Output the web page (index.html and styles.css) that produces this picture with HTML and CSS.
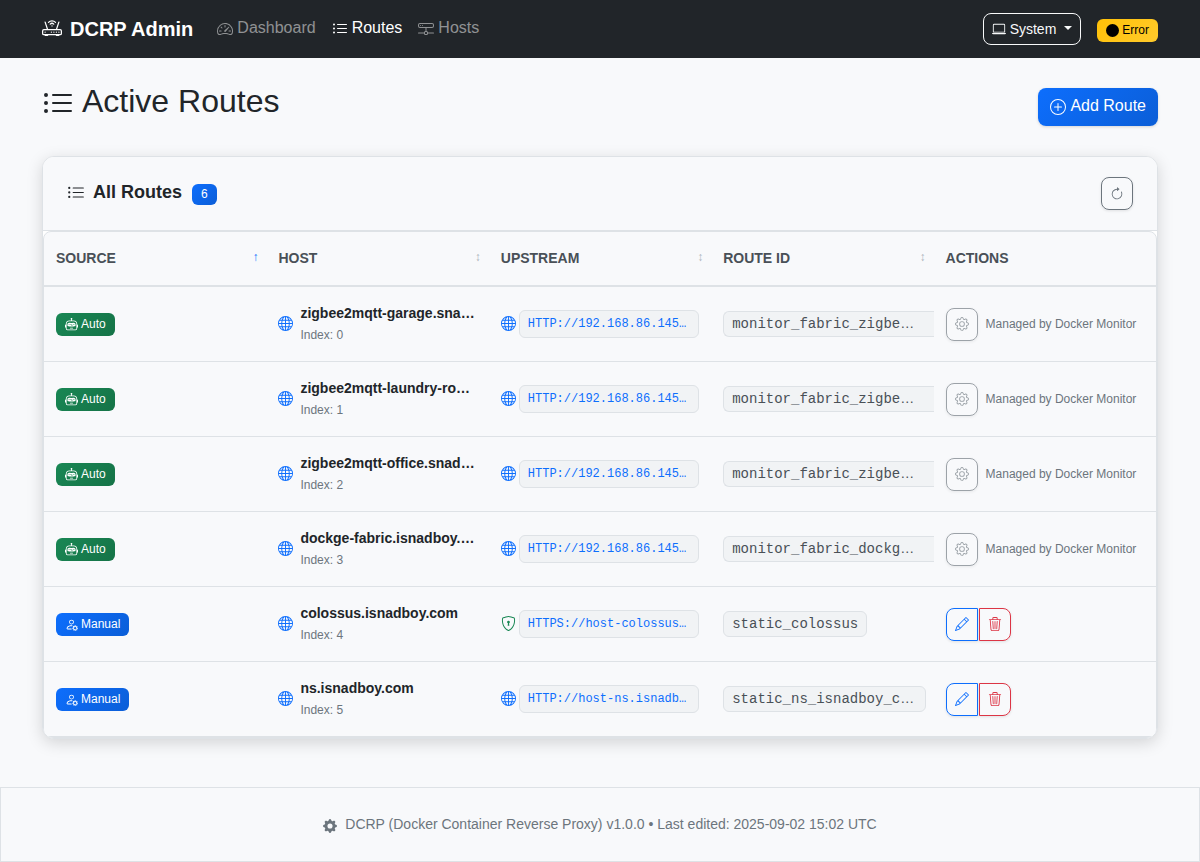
FILE: index.html
```html
<!DOCTYPE html>
<html lang="en">
<head>
<meta charset="utf-8">
<meta name="viewport" content="width=device-width, initial-scale=1">
<title>Active Routes - DCRP Admin</title>
<link rel="stylesheet" href="styles.css">
</head>
<body>
<svg class="sprite" aria-hidden="true">
  <symbol id="list" viewBox="0 0 16 16"><path fill-rule="evenodd" d="M5 11.5a.5.5 0 0 1 .5-.5h9a.5.5 0 0 1 0 1h-9a.5.5 0 0 1-.5-.5m0-4a.5.5 0 0 1 .5-.5h9a.5.5 0 0 1 0 1h-9a.5.5 0 0 1-.5-.5m0-4a.5.5 0 0 1 .5-.5h9a.5.5 0 0 1 0 1h-9a.5.5 0 0 1-.5-.5m-3 1a1 1 0 1 0 0-2 1 1 0 0 0 0 2m0 4a1 1 0 1 0 0-2 1 1 0 0 0 0 2m0 4a1 1 0 1 0 0-2 1 1 0 0 0 0 2"/></symbol>
  <symbol id="router" viewBox="0 0 16 16"><path d="M5.525 3.025a3.5 3.5 0 0 1 4.95 0 .5.5 0 1 0 .707-.707 4.5 4.5 0 0 0-6.364 0 .5.5 0 0 0 .707.707"/><path d="M6.94 4.44a1.5 1.5 0 0 1 2.12 0 .5.5 0 0 0 .708-.708 2.5 2.5 0 0 0-3.536 0 .5.5 0 0 0 .707.707ZM2.5 11a.5.5 0 1 1 0-1 .5.5 0 0 1 0 1m4.5-.5a.5.5 0 1 0 1 0 .5.5 0 0 0-1 0m2.5.5a.5.5 0 1 1 0-1 .5.5 0 0 1 0 1m1.5-.5a.5.5 0 1 0 1 0 .5.5 0 0 0-1 0m2 0a.5.5 0 1 0 1 0 .5.5 0 0 0-1 0"/><path d="M2.974 2.342a.5.5 0 1 0-.948.316L3.806 8H1.5A1.5 1.5 0 0 0 0 9.5v2A1.5 1.5 0 0 0 1.5 13H2a.5.5 0 0 0 .5.5h2A.5.5 0 0 0 5 13h6a.5.5 0 0 0 .5.5h2a.5.5 0 0 0 .5-.5h.5a1.5 1.5 0 0 0 1.5-1.5v-2A1.5 1.5 0 0 0 14.5 8h-2.306l1.78-5.342a.5.5 0 1 0-.948-.316L11.14 8H4.86zM14.5 9a.5.5 0 0 1 .5.5v2a.5.5 0 0 1-.5.5h-13a.5.5 0 0 1-.5-.5v-2a.5.5 0 0 1 .5-.5z"/><path d="M8.5 5.5a.5.5 0 1 1-1 0 .5.5 0 0 1 1 0"/></symbol>
  <symbol id="speedometer" viewBox="0 0 16 16"><path d="M8 4a.5.5 0 0 1 .5.5V6a.5.5 0 0 1-1 0V4.5A.5.5 0 0 1 8 4M3.732 5.732a.5.5 0 0 1 .707 0l.915.914a.5.5 0 1 1-.708.708l-.914-.915a.5.5 0 0 1 0-.707M2 10a.5.5 0 0 1 .5-.5h1.586a.5.5 0 0 1 0 1H2.5A.5.5 0 0 1 2 10m9.5 0a.5.5 0 0 1 .5-.5h1.5a.5.5 0 0 1 0 1H12a.5.5 0 0 1-.5-.5m.754-4.246a.39.39 0 0 0-.527-.02L7.547 9.31a.91.91 0 1 0 1.302 1.258l3.434-4.297a.39.39 0 0 0-.029-.518z"/><path fill-rule="evenodd" d="M0 10a8 8 0 1 1 15.547 2.661c-.442 1.253-1.845 1.602-2.932 1.25C11.309 13.488 9.475 13 8 13c-1.474 0-3.31.488-4.615.911-1.087.352-2.49.003-2.932-1.25A8 8 0 0 1 0 10m8-7a7 7 0 0 0-6.603 9.329c.203.575.923.876 1.68.63C4.397 12.533 6.358 12 8 12s3.604.532 4.923.96c.757.245 1.477-.056 1.68-.631A7 7 0 0 0 8 3"/></symbol>
  <symbol id="network" viewBox="0 0 16 16"><path d="M4.5 5a.5.5 0 1 0 0-1 .5.5 0 0 0 0 1M3 4.5a.5.5 0 1 1-1 0 .5.5 0 0 1 1 0"/><path d="M0 4a2 2 0 0 1 2-2h12a2 2 0 0 1 2 2v1a2 2 0 0 1-2 2H8.5v3a1.5 1.5 0 0 1 1.5 1.5h5.5a.5.5 0 0 1 0 1H10A1.5 1.5 0 0 1 8.5 14h-1A1.5 1.5 0 0 1 6 12.5H.5a.5.5 0 0 1 0-1H6A1.5 1.5 0 0 1 7.5 10V7H2a2 2 0 0 1-2-2zm1 0v1a1 1 0 0 0 1 1h12a1 1 0 0 0 1-1V4a1 1 0 0 0-1-1H2a1 1 0 0 0-1 1m6 7.5v1a.5.5 0 0 0 .5.5h1a.5.5 0 0 0 .5-.5v-1a.5.5 0 0 0-.5-.5h-1a.5.5 0 0 0-.5.5"/></symbol>
  <symbol id="laptop" viewBox="0 0 16 16"><path d="M13.5 3a.5.5 0 0 1 .5.5V11H2V3.500a.5.5 0 0 1 .5-.5zm-11-1A1.5 1.500 0 0 0 1 3.500V12h14V3.500A1.500 1.500 0 0 0 13.500 2zM0 12.500h16a1.500 1.500 0 0 1-1.500 1.500h-13A1.500 1.500 0 0 1 0 12.500"/></symbol>
  <symbol id="dot" viewBox="0 0 16 16"><circle cx="8" cy="8" r="8"/></symbol>
  <symbol id="plus" viewBox="0 0 16 16"><path d="M8 15A7 7 0 1 1 8 1a7 7 0 0 1 0 14m0 1A8 8 0 1 0 8 0a8 8 0 0 0 0 16"/><path d="M8 4a.5.5 0 0 1 .5.5v3h3a.5.5 0 0 1 0 1h-3v3a.5.5 0 0 1-1 0v-3h-3a.5.5 0 0 1 0-1h3v-3A.5.5 0 0 1 8 4"/></symbol>
  <symbol id="refresh" viewBox="0 0 16 16"><path fill-rule="evenodd" d="M8 3a5 5 0 1 0 4.546 2.914.5.5 0 0 1 .908-.417A6 6 0 1 1 8 2z"/><path d="M8 4.466V.534a.25.25 0 0 1 .41-.192l2.36 1.966c.12.1.12.284 0 .384L8.410 4.658A.25.25 0 0 1 8 4.466"/></symbol>
  <symbol id="robot" viewBox="0 0 16 16"><path d="M6 12.5a.5.5 0 0 1 .5-.5h3a.5.5 0 0 1 0 1h-3a.5.5 0 0 1-.5-.5M3 8.062C3 6.760 4.235 5.765 5.530 5.886a26.600 26.600 0 0 0 4.940 0C11.765 5.765 13 6.760 13 8.062v1.157a.93.93 0 0 1-.765.935c-.845.147-2.340.346-4.235.346s-3.390-.2-4.235-.346A.93.93 0 0 1 3 9.219zm4.542-.827a.25.25 0 0 0-.217.068l-.92.900a25 25 0 0 1-1.871-.183.25.25 0 0 0-.068.495c.550.076 1.232.149 2.020.193a.25.25 0 0 0 .189-.071l.754-.736.847 1.710a.25.25 0 0 0 .404.062l.932-.970a25 25 0 0 0 1.922-.188.25.25 0 0 0-.068-.495c-.538.074-1.207.145-1.980.189a.25.25 0 0 0-.166.076l-.754.785-.842-1.700a.25.25 0 0 0-.182-.135"/><path d="M8.500 1.866a1 1 0 1 0-1 0V3h-2A4.500 4.500 0 0 0 1 7.500V8a1 1 0 0 0-1 1v2a1 1 0 0 0 1 1v1a2 2 0 0 0 2 2h10a2 2 0 0 0 2-2v-1a1 1 0 0 0 1-1V9a1 1 0 0 0-1-1v-.5A4.500 4.500 0 0 0 10.500 3h-2zM14 7.500V13a1 1 0 0 1-1 1H3a1 1 0 0 1-1-1V7.500A3.500 3.500 0 0 1 5.500 4h5A3.500 3.500 0 0 1 14 7.500"/></symbol>
  <symbol id="person" viewBox="0 0 16 16"><path d="M11 5a3 3 0 1 1-6 0 3 3 0 0 1 6 0M8 7a2 2 0 1 0 0-4 2 2 0 0 0 0 4m.256 7a4.500 4.500 0 0 1-.229-1.004H3c.001-.246.154-.986.832-1.664C4.484 10.680 5.711 10 8 10q.390 0 .740.025c.226-.341.496-.650.804-.918Q8.844 9.002 8 9c-5 0-6 3-6 4s1 1 1 1z"/><circle cx="12.500" cy="12.500" r="2.100" fill="none" stroke="currentColor" stroke-width="1.200"/><path fill="none" stroke="currentColor" stroke-width="1.300" d="M12.500 9v1m0 5v1M9 12.500h1m5 0h1M10 10l.8.8m3.400 3.400.8.8m0-5-.8.8m-3.400 3.400-.8.8"/></symbol>
  <symbol id="globe" viewBox="0 0 16 16"><path d="M0 8a8 8 0 1 1 16 0A8 8 0 0 1 0 8m7.500-6.923c-.670.204-1.335.820-1.887 1.855A8 8 0 0 0 5.145 4H7.500zM4.090 4a9.300 9.300 0 0 1 .640-1.539 7 7 0 0 1 .597-.933A7.030 7.030 0 0 0 2.255 4zm-.582 3.500c.030-.877.138-1.718.312-2.500H1.674a7 7 0 0 0-.656 2.500zM4.847 5a12.500 12.500 0 0 0-.338 2.500H7.500V5zM8.500 5v2.500h2.990a12.500 12.500 0 0 0-.337-2.500zM4.510 8.500a12.500 12.500 0 0 0 .337 2.500H7.500V8.500zm3.990 0V11h2.653c.187-.765.306-1.608.338-2.500zM5.145 12q.208.580.468 1.068c.552 1.035 1.218 1.650 1.887 1.855V12zm.182 2.472a7 7 0 0 1-.597-.933A9.300 9.300 0 0 1 4.090 12H2.255a7 7 0 0 0 3.072 2.472M3.820 11a13.700 13.700 0 0 1-.312-2.500h-2.490c.062.890.291 1.733.656 2.500zm6.853 3.472A7 7 0 0 0 13.745 12H11.910a9.300 9.300 0 0 1-.640 1.539 7 7 0 0 1-.597.933M8.500 12v2.923c.670-.204 1.335-.820 1.887-1.855q.260-.487.468-1.068zm3.680-1h2.146c.365-.767.594-1.610.656-2.500h-2.490a13.700 13.700 0 0 1-.312 2.500m2.802-3.500a7 7 0 0 0-.656-2.500H12.180c.174.782.282 1.623.312 2.500zM11.270 2.461c.247.464.462.980.640 1.539h1.835a7 7 0 0 0-3.072-2.472c.218.284.418.598.597.933M10.855 4a8 8 0 0 0-.468-1.068C9.835 1.897 9.170 1.282 8.500 1.077V4z"/></symbol>
  <symbol id="shield" viewBox="0 0 16 16"><path d="M5.338 1.590a61 61 0 0 0-2.837.856.480.480 0 0 0-.328.390c-.554 4.157.726 7.190 2.253 9.188a10.700 10.700 0 0 0 2.287 2.233c.346.244.652.420.893.533q.180.085.293.118a1 1 0 0 0 .101.025 1 1 0 0 0 .100-.025q.114-.034.294-.118c.240-.113.547-.290.893-.533a10.700 10.700 0 0 0 2.287-2.233c1.527-1.997 2.807-5.031 2.253-9.188a.480.480 0 0 0-.328-.390c-.651-.213-1.750-.560-2.837-.855C9.552 1.290 8.531 1.067 8 1.067c-.530 0-1.552.223-2.662.524zM5.072.560C6.157.265 7.310 0 8 0s1.843.265 2.928.560c1.110.300 2.229.655 2.887.870a1.540 1.540 0 0 1 1.044 1.262c.596 4.477-.787 7.795-2.465 9.990a11.800 11.800 0 0 1-2.517 2.453 7 7 0 0 1-1.048.625c-.280.132-.581.240-.829.240s-.548-.108-.829-.240a7 7 0 0 1-1.048-.625 11.800 11.800 0 0 1-2.517-2.453C1.928 10.487.545 7.169 1.141 2.692A1.540 1.540 0 0 1 2.185 1.430 63 63 0 0 1 5.072.560"/><path d="M9.500 6.500a1.500 1.500 0 0 1-1 1.415l.385 1.990a.500.500 0 0 1-.491.595h-.788a.500.500 0 0 1-.490-.595l.384-1.990a1.500 1.500 0 1 1 2-1.415"/></symbol>
  <symbol id="gear" viewBox="0 0 16 16"><path d="M8 4.754a3.246 3.246 0 1 0 0 6.492 3.246 3.246 0 0 0 0-6.492M5.754 8a2.246 2.246 0 1 1 4.492 0 2.246 2.246 0 0 1-4.492 0"/><path d="M9.796 1.343c-.527-1.790-3.065-1.790-3.592 0l-.094.319a.873.873 0 0 1-1.255.520l-.292-.160c-1.640-.892-3.433.902-2.540 2.541l.159.292a.873.873 0 0 1-.520 1.255l-.319.094c-1.790.527-1.790 3.065 0 3.592l.319.094a.873.873 0 0 1 .520 1.255l-.160.292c-.892 1.640.901 3.434 2.541 2.540l.292-.159a.873.873 0 0 1 1.255.520l.094.319c.527 1.790 3.065 1.790 3.592 0l.094-.319a.873.873 0 0 1 1.255-.520l.292.160c1.640.893 3.434-.902 2.540-2.541l-.159-.292a.873.873 0 0 1 .520-1.255l.319-.094c1.790-.527 1.790-3.065 0-3.592l-.319-.094a.873.873 0 0 1-.520-1.255l.160-.292c.893-1.640-.902-3.433-2.541-2.540l-.292.159a.873.873 0 0 1-1.255-.520zm-2.633.283c.246-.835 1.428-.835 1.674 0l.094.319a1.873 1.873 0 0 0 2.693 1.115l.291-.160c.764-.415 1.600.420 1.184 1.185l-.159.292a1.873 1.873 0 0 0 1.116 2.692l.318.094c.835.246.835 1.428 0 1.674l-.319.094a1.873 1.873 0 0 0-1.115 2.693l.160.291c.415.764-.420 1.600-1.185 1.184l-.291-.159a1.873 1.873 0 0 0-2.693 1.116l-.094.318c-.246.835-1.428.835-1.674 0l-.094-.319a1.873 1.873 0 0 0-2.692-1.115l-.292.160c-.764.415-1.600-.420-1.184-1.185l.159-.291A1.873 1.873 0 0 0 1.945 8.930l-.319-.094c-.835-.246-.835-1.428 0-1.674l.319-.094A1.873 1.873 0 0 0 3.060 4.377l-.160-.292c-.415-.764.420-1.600 1.185-1.184l.292.159a1.873 1.873 0 0 0 2.692-1.115z"/></symbol>
  <symbol id="gear-fill" viewBox="0 0 16 16"><path d="M9.405 1.050c-.413-1.400-2.397-1.400-2.810 0l-.100.340a1.464 1.464 0 0 1-2.105.872l-.310-.170c-1.283-.698-2.686.705-1.987 1.987l.169.311c.446.820.023 1.841-.872 2.105l-.340.100c-1.400.413-1.400 2.397 0 2.810l.340.100a1.464 1.464 0 0 1 .872 2.105l-.170.310c-.698 1.283.705 2.686 1.987 1.987l.311-.169a1.464 1.464 0 0 1 2.105.872l.100.340c.413 1.400 2.397 1.400 2.810 0l.100-.340a1.464 1.464 0 0 1 2.105-.872l.310.170c1.283.698 2.686-.705 1.987-1.987l-.169-.311a1.464 1.464 0 0 1 .872-2.105l.340-.100c1.400-.413 1.400-2.397 0-2.810l-.340-.100a1.464 1.464 0 0 1-.872-2.105l.170-.310c.698-1.283-.705-2.686-1.987-1.987l-.311.169a1.464 1.464 0 0 1-2.105-.872zM8 10.930a2.929 2.929 0 1 1 0-5.860 2.929 2.929 0 0 1 0 5.858z"/></symbol>
  <symbol id="pencil" viewBox="0 0 16 16"><path d="M12.146.146a.5.5 0 0 1 .708 0l3 3a.5.5 0 0 1 0 .708l-10 10a.5.5 0 0 1-.168.110l-5 2a.5.5 0 0 1-.650-.650l2-5a.5.5 0 0 1 .110-.168zM11.207 2.500 13.500 4.793 14.793 3.500 12.500 1.207zm1.586 3L10.500 3.207 4 9.707V10h.5a.5.5 0 0 1 .5.5v.5h.5a.5.5 0 0 1 .5.5v.5h.293zm-9.761 5.175-.106.106-1.528 3.821 3.821-1.528.106-.106A.5.5 0 0 1 5 12.500V12h-.5a.5.5 0 0 1-.5-.5V11h-.5a.5.5 0 0 1-.468-.325"/></symbol>
  <symbol id="trash" viewBox="0 0 16 16"><path d="M6.500 1h3a.5.5 0 0 1 .5.5v1H6v-1a.5.5 0 0 1 .5-.5M11 2.500v-1A1.500 1.500 0 0 0 9.500 0h-3A1.500 1.500 0 0 0 5 1.500v1H1.500a.5.5 0 0 0 0 1h.538l.853 10.660A2 2 0 0 0 4.885 16h6.230a2 2 0 0 0 1.994-1.840l.853-10.660h.538a.5.5 0 0 0 0-1zm1.958 1-.846 10.580a1 1 0 0 1-.997.920h-6.230a1 1 0 0 1-.997-.920L3.042 3.500zm-7.487 1a.5.5 0 0 1 .528.470l.5 8.500a.5.5 0 0 1-.998.060L5 5.030a.5.5 0 0 1 .471-.530m5.058 0a.5.5 0 0 1 .470.530l-.5 8.500a.5.5 0 1 1-.998-.060l.5-8.500a.5.5 0 0 1 .528-.470M8 4.500a.5.5 0 0 1 .5.5v8.500a.5.5 0 0 1-1 0V5a.5.5 0 0 1 .5-.5"/></symbol>
</svg>

<header class="navbar">
  <div class="container navbar-inner">
    <a class="brand" href="#"><svg class="icon"><use href="#router"/></svg>DCRP Admin</a>
    <nav class="nav" aria-label="Main">
      <a class="nav-link" href="#"><svg class="icon"><use href="#speedometer"/></svg>Dashboard</a>
      <a class="nav-link active" href="#" aria-current="page"><svg class="icon"><use href="#list"/></svg>Routes</a>
      <a class="nav-link" href="#"><svg class="icon"><use href="#network"/></svg>Hosts</a>
    </nav>
    <button class="system" type="button" aria-haspopup="true"><svg class="icon"><use href="#laptop"/></svg> System<span class="caret"></span></button>
    <span class="badge badge-warning"><svg class="icon"><use href="#dot"/></svg>Error</span>
  </div>
</header>

<main class="container main">
  <div class="page-head">
    <h1><svg class="icon"><use href="#list"/></svg>Active Routes</h1>
    <button class="add" type="button"><svg class="icon"><use href="#plus"/></svg>Add Route</button>
  </div>

  <section class="card">
    <div class="card-head">
      <h2><svg class="icon"><use href="#list"/></svg>All Routes</h2>
      <span class="badge badge-primary count">6</span>
      <button class="btn btn-gray" type="button" aria-label="Refresh"><svg class="icon"><use href="#refresh"/></svg></button>
    </div>
    <div class="table-wrap">
      <table>
        <thead>
          <tr>
            <th><div class="th">Source<span class="sort sorted">↑</span></div></th>
            <th><div class="th">Host<span class="sort">↕</span></div></th>
            <th><div class="th">Upstream<span class="sort">↕</span></div></th>
            <th><div class="th">Route ID<span class="sort">↕</span></div></th>
            <th><div class="th">Actions</div></th>
          </tr>
        </thead>
        <tbody>
          <tr>
            <td><span class="badge badge-success"><svg class="icon"><use href="#robot"/></svg>Auto</span></td>
            <td><div class="host"><svg class="icon"><use href="#globe"/></svg><div><strong>zigbee2mqtt-garage.sna…</strong><small>Index: 0</small></div></div></td>
            <td><div class="upstream"><svg class="icon"><use href="#globe"/></svg><code>HTTP://192.168.86.145…</code></div></td>
            <td><code class="route cut">monitor_fabric_zigbe<span>…</span></code></td>
            <td><div class="actions"><button class="btn btn-gray" type="button" disabled aria-label="Settings"><svg class="icon"><use href="#gear"/></svg></button><span class="note">Managed by Docker Monitor</span></div></td>
          </tr>
          <tr>
            <td><span class="badge badge-success"><svg class="icon"><use href="#robot"/></svg>Auto</span></td>
            <td><div class="host"><svg class="icon"><use href="#globe"/></svg><div><strong>zigbee2mqtt-laundry-ro…</strong><small>Index: 1</small></div></div></td>
            <td><div class="upstream"><svg class="icon"><use href="#globe"/></svg><code>HTTP://192.168.86.145…</code></div></td>
            <td><code class="route cut">monitor_fabric_zigbe<span>…</span></code></td>
            <td><div class="actions"><button class="btn btn-gray" type="button" disabled aria-label="Settings"><svg class="icon"><use href="#gear"/></svg></button><span class="note">Managed by Docker Monitor</span></div></td>
          </tr>
          <tr>
            <td><span class="badge badge-success"><svg class="icon"><use href="#robot"/></svg>Auto</span></td>
            <td><div class="host"><svg class="icon"><use href="#globe"/></svg><div><strong>zigbee2mqtt-office.snad…</strong><small>Index: 2</small></div></div></td>
            <td><div class="upstream"><svg class="icon"><use href="#globe"/></svg><code>HTTP://192.168.86.145…</code></div></td>
            <td><code class="route cut">monitor_fabric_zigbe<span>…</span></code></td>
            <td><div class="actions"><button class="btn btn-gray" type="button" disabled aria-label="Settings"><svg class="icon"><use href="#gear"/></svg></button><span class="note">Managed by Docker Monitor</span></div></td>
          </tr>
          <tr>
            <td><span class="badge badge-success"><svg class="icon"><use href="#robot"/></svg>Auto</span></td>
            <td><div class="host"><svg class="icon"><use href="#globe"/></svg><div><strong>dockge-fabric.isnadboy.…</strong><small>Index: 3</small></div></div></td>
            <td><div class="upstream"><svg class="icon"><use href="#globe"/></svg><code>HTTP://192.168.86.145…</code></div></td>
            <td><code class="route cut">monitor_fabric_dockg<span>…</span></code></td>
            <td><div class="actions"><button class="btn btn-gray" type="button" disabled aria-label="Settings"><svg class="icon"><use href="#gear"/></svg></button><span class="note">Managed by Docker Monitor</span></div></td>
          </tr>
          <tr>
            <td><span class="badge badge-primary"><svg class="icon"><use href="#person"/></svg>Manual</span></td>
            <td><div class="host"><svg class="icon"><use href="#globe"/></svg><div><strong>colossus.isnadboy.com</strong><small>Index: 4</small></div></div></td>
            <td><div class="upstream"><svg class="icon secure"><use href="#shield"/></svg><code>HTTPS://host-colossus…</code></div></td>
            <td><code class="route">static_colossus</code></td>
            <td><div class="actions pair"><button class="btn btn-blue" type="button" aria-label="Edit"><svg class="icon"><use href="#pencil"/></svg></button><button class="btn btn-red" type="button" aria-label="Delete"><svg class="icon"><use href="#trash"/></svg></button></div></td>
          </tr>
          <tr>
            <td><span class="badge badge-primary"><svg class="icon"><use href="#person"/></svg>Manual</span></td>
            <td><div class="host"><svg class="icon"><use href="#globe"/></svg><div><strong>ns.isnadboy.com</strong><small>Index: 5</small></div></div></td>
            <td><div class="upstream"><svg class="icon"><use href="#globe"/></svg><code>HTTP://host-ns.isnadb…</code></div></td>
            <td><code class="route long">static_ns_isnadboy_c<span>…</span></code></td>
            <td><div class="actions pair"><button class="btn btn-blue" type="button" aria-label="Edit"><svg class="icon"><use href="#pencil"/></svg></button><button class="btn btn-red" type="button" aria-label="Delete"><svg class="icon"><use href="#trash"/></svg></button></div></td>
          </tr>
        </tbody>
      </table>
    </div>
  </section>
</main>

<footer class="footer"><svg class="icon"><use href="#gear-fill"/></svg>DCRP (Docker Container Reverse Proxy) v1.0.0 • Last edited: 2025-09-02 15:02 UTC</footer>
</body>
</html>
```
FILE: styles.css
```css
:root {
  --page: #f8f9fb;
  --line: #dee2e6;
  --ink: #212529;
  --muted: #6c757d;
  --blue: #0d6efd;
  --green: #198754;
  --red: #dc3545;
}
* { box-sizing: border-box; }
body {
  margin: 0;
  background: var(--page);
  color: var(--ink);
  font: 16px/24px "Liberation Sans", Arial, sans-serif;
}
button { font-family: inherit; cursor: pointer; }
a { text-decoration: none; }
.sprite { display: none; }
.icon {
  width: 1em;
  height: 1em;
  fill: currentColor;
  vertical-align: -0.125em;
}
.container {
  max-width: 1140px;
  margin: 0 auto;
  padding: 0 12px;
}

/* Navigation */
.navbar { background: var(--ink); }
.navbar-inner {
  display: flex;
  align-items: center;
  min-height: 58px;
}
.brand {
  margin-right: 16px;
  color: #fff;
  font-size: 20px;
  font-weight: 700;
  line-height: 30px;
}
.brand .icon { margin-right: 8px; }
.nav {
  display: flex;
  flex: 1;
  padding-bottom: 2px;
}
.nav-link {
  padding: 8px;
  color: rgba(255, 255, 255, 0.5);
}
.nav-link .icon { margin-right: 4px; vertical-align: -4px; }
.nav-link.active { color: #fff; }
.system {
  height: 32px;
  margin-right: 16px;
  padding: 0 8px;
  border: 1px solid #f8f9fa;
  border-radius: 8px;
  background: transparent;
  color: #f8f9fa;
  font-size: 14px;
  line-height: 28px;
}
.caret {
  display: inline-block;
  margin-left: 8px;
  border: 4px solid transparent;
  border-top-color: currentColor;
  border-bottom: 0;
  vertical-align: 4px;
}
.badge {
  display: inline-block;
  padding: 4px 9px;
  border-radius: 6px;
  color: #fff;
  font-size: 12px;
  line-height: 15px;
}
.badge .icon {
  width: 13px;
  height: 13px;
  margin-right: 3px;
  vertical-align: -3px;
}
.badge-warning {
  margin-top: 3px;
  background: linear-gradient(135deg, #ffc107, #ffca2c);
  color: #000;
}
.badge-primary { background: linear-gradient(135deg, var(--blue), #0b5ed7); }
.badge-success { background: linear-gradient(135deg, var(--green), #157347); }

/* Page heading */
.main { padding-top: 24px; }
.page-head {
  display: flex;
  align-items: center;
  justify-content: space-between;
  margin-bottom: 24px;
}
h1 {
  margin: 0 0 12px;
  font-size: 32px;
  font-weight: 400;
  line-height: 38px;
}
h1 .icon { margin-right: 8px; vertical-align: -8px; }
.add {
  height: 38px;
  padding: 0 12px 2px;
  border: 0;
  border-radius: 8px;
  background: linear-gradient(135deg, var(--blue), #0b5ed7);
  box-shadow: 0 1px 3px rgba(0, 0, 0, 0.15);
  color: #fff;
  font-size: 16px;
  line-height: 34px;
}
.add .icon { margin-right: 4px; vertical-align: -4px; }

/* Routes card */
.card {
  border: 1px solid var(--line);
  border-radius: 12px;
  background: #fff;
  box-shadow: 0 4px 16px rgba(0, 0, 0, 0.15);
  overflow: hidden;
}
.card-head {
  display: flex;
  align-items: center;
  padding: 20px 24px;
  border-bottom: 1px solid var(--line);
  background: var(--page);
}
h2 {
  margin: 0 10px 4px 0;
  font-size: 18px;
  line-height: 22px;
}
h2 .icon {
  width: 18px;
  height: 18px;
  margin-right: 8px;
  vertical-align: -4px;
}
.count { margin-top: 2px; padding: 3px 9px; }
.card-head .btn { margin-left: auto; }
.table-wrap {
  border: 1px solid var(--line);
  border-radius: 8px;
  background: var(--page);
  overflow-x: auto;
}
table {
  width: 100%;
  border-collapse: separate;
  border-spacing: 0;
  table-layout: fixed;
}
th {
  padding: 16px 12px;
  border-bottom: 2px solid var(--line);
  color: #495057;
  font-size: 14px;
  line-height: 21px;
  text-align: left;
  text-transform: uppercase;
}
.th { display: flex; justify-content: space-between; }
.sort {
  margin-right: -4px;
  color: #adb5bd;
  font-size: 12px;
  font-weight: 400;
  line-height: 19px;
}
.sorted { color: var(--blue); }
td {
  padding: 16px 12px;
  border-bottom: 1px solid var(--line);
  font-size: 14px;
  line-height: 21px;
  overflow: hidden;
  white-space: nowrap;
}
td .badge { vertical-align: middle; }
.host, .upstream, .actions { display: flex; align-items: center; }
.host { gap: 7px; }
.host .icon, .upstream .icon {
  flex: none;
  width: 15px;
  height: 15px;
  margin-bottom: 2px;
  color: var(--blue);
}
.host strong, .host small { display: block; }
.host small {
  padding-top: 2px;
  color: var(--muted);
  font-size: 12px;
  line-height: 19px;
}
.upstream { gap: 3px; }
.upstream .secure { color: var(--green); }
code {
  padding: 2px 8px;
  border: 1px solid var(--line);
  border-radius: 6px;
  background: #f1f3f5;
  font-family: "Liberation Mono", "Courier New", monospace;
}
.upstream code {
  flex: 1;
  color: var(--blue);
  font-size: 12px;
  line-height: 22px;
}
.route {
  display: block;
  width: fit-content;
  height: 26px;
  color: #495057;
  font-size: 14px;
  line-height: 20px;
}
.route span { font-family: "Liberation Sans", Arial, sans-serif; line-height: 1; }
.route.long { padding-right: 11px; }
.route.cut {
  width: auto;
  margin-right: -12px;
  border-right: 0;
  border-radius: 6px 0 0 6px;
}
.btn {
  display: flex;
  align-items: center;
  justify-content: center;
  width: 32px;
  height: 33px;
  padding: 0;
  border: 1px solid currentColor;
  border-radius: 8px;
  background: transparent;
  box-shadow: 0 1px 3px rgba(0, 0, 0, 0.1);
  font-size: 14px;
}
.btn-gray { color: var(--muted); }
.btn-blue { color: var(--blue); }
.btn-red { color: var(--red); }
.btn:disabled { opacity: 0.65; cursor: default; }
.actions { gap: 8px; }
.pair { gap: 1px; }
.pair .btn-blue { border-radius: 8px 0 0 8px; }
.pair .btn-red { border-radius: 0 8px 8px 0; }
.note { color: var(--muted); font-size: 12px; }

/* Footer */
.footer {
  margin-top: 48px;
  padding: 26px 12px;
  border: 1px solid var(--line);
  color: var(--muted);
  font-size: 14px;
  line-height: 21px;
  text-align: center;
}
.footer .icon { margin-right: 8px; vertical-align: -4px; }
```
